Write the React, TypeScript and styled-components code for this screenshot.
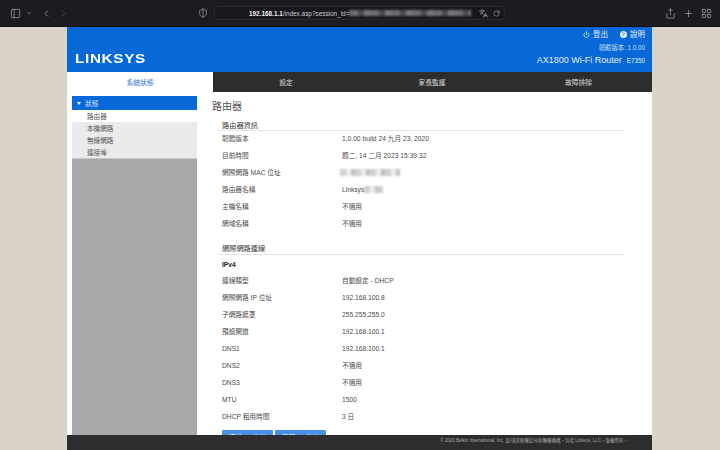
import { createGlobalStyle, styled } from "styled-components";
import type { ReactNode } from "react";
import {
  ChevronDown,
  ChevronLeft,
  ChevronRight,
  Languages,
  LayoutGrid,
  PanelLeft,
  Plus,
  Power,
  RotateCw,
  Share,
  ShieldHalf,
} from "lucide-react";
import { BsQuestionCircleFill } from "react-icons/bs";

const GlobalStyle = createGlobalStyle`
  html, body {
    margin: 0;
    padding: 0;
    height: 100%;
    overflow: hidden;
    background: #d9d3c9;
    font-family: "Liberation Sans", "Noto Sans CJK TC", sans-serif;
  }
`;

const Page = styled.div`
  width: 720px;
  height: 450px;
  display: flex;
  flex-direction: column;
  overflow: hidden;
`;

const BrowserBar = styled.div`
  height: 26px;
  flex: none;
  background: #1c1b20;
  border-bottom: 1px solid #0e0e10;
  display: flex;
  align-items: center;
  padding: 0 8px 0 10px;
  color: #a9a9ad;
`;

const ToolGroup = styled.div<{ $gap: number; $left?: number }>`
  display: flex;
  align-items: center;
  gap: ${(p) => p.$gap}px;
  margin-left: ${(p) => p.$left ?? 0}px;
  flex: none;
`;

const AddressBar = styled.div`
  width: 291px;
  height: 14px;
  margin-left: 6px;
  flex: none;
  border-radius: 4px;
  background: #18171b;
  border: 1px solid #29282d;
  display: flex;
  align-items: center;
  padding: 0 4px 0 34px;
  box-sizing: border-box;
  color: #d8d8da;
  font-size: 6.4px;
`;

const Url = styled.span`
  flex: none;
  color: #c9c9cb;
  b {
    color: #f0f0f0;
    font-weight: 700;
  }
`;

const UrlMask = styled.span`
  flex: none;
  width: 122px;
  height: 6px;
  margin-right: 8px;
  background: repeating-linear-gradient(90deg, #6d6d70 0 9px, #4c4c50 9px 15px, #77777a 15px 21px);
  filter: blur(0.8px);
`;

const Spacer = styled.div`
  flex: 1;
`;

const Shell = styled.div`
  width: 585px;
  margin-left: 67px;
  flex: 1;
  min-height: 0;
  display: flex;
  flex-direction: column;
  background: #fff;
`;

const Header = styled.header`
  height: 45px;
  box-sizing: border-box;
  flex: none;
  background: #0768d8;
  display: flex;
  justify-content: space-between;
  align-items: flex-end;
  color: #fff;
  padding: 0 7px 5px 8px;
`;

const Logo = styled.div`
  font-size: 13.5px;
  font-weight: 700;
  line-height: 13px;
  letter-spacing: 0.6px;
  margin-bottom: 2px;
  transform: scaleX(1.13);
  transform-origin: left center;
`;

const HeaderInfo = styled.div`
  display: flex;
  flex-direction: column;
  align-items: flex-end;
`;

const HeaderLinks = styled.div`
  display: flex;
  gap: 12px;
  font-size: 7.5px;
  line-height: 9px;
  margin-bottom: 5px;
  color: #e8f0fb;
`;

const HeaderLink = styled.span`
  display: inline-flex;
  align-items: center;
  gap: 3px;
`;

const Firmware = styled.div`
  font-size: 6.3px;
  line-height: 8px;
  color: #cfe0f6;
  margin-bottom: 2px;
`;

const Model = styled.div`
  font-size: 9px;
  line-height: 12px;
  color: #e6effb;
  small {
    font-size: 6.3px;
    margin-left: 5px;
  }
`;

const Tabs = styled.nav`
  height: 20px;
  flex: none;
  display: grid;
  grid-template-columns: 146px 146px 146px 147px;
`;

const Tab = styled.div<{ $active?: boolean }>`
  display: flex;
  align-items: center;
  justify-content: center;
  font-size: 6.8px;
  color: ${(p) => (p.$active ? "#2a72d4" : "#dcdcdc")};
  background: ${(p) => (p.$active ? "#fff" : "#2d2d2d")};
`;

const Body = styled.div`
  flex: 1;
  min-height: 0;
  display: flex;
  overflow: hidden;
`;

const Sidebar = styled.aside`
  width: 125px;
  flex: none;
  margin: 4px 0 0 5px;
  display: flex;
  flex-direction: column;
  background: #a8a8a8;
`;

const SideHead = styled.div`
  height: 14px;
  flex: none;
  background: #0768d8;
  color: #d9e7fa;
  font-size: 6.8px;
  display: flex;
  align-items: center;
  padding-left: 5px;
  gap: 4px;
`;

const Caret = styled.i`
  width: 0;
  height: 0;
  border-left: 2.5px solid transparent;
  border-right: 2.5px solid transparent;
  border-top: 3px solid #fff;
`;

const SideList = styled.div`
  background: #eaeaea;
  border-bottom: 1px solid #c9c9c9;
`;

const SideItem = styled.div<{ $active?: boolean }>`
  height: 12px;
  display: flex;
  align-items: center;
  padding-left: 15px;
  font-size: 6.6px;
  color: #555;
  background: ${(p) => (p.$active ? "#fff" : "transparent")};
`;

const Main = styled.main`
  flex: 1;
  min-width: 0;
  padding: 8px 27px 0 15px;
  color: #444;
`;

const Title = styled.h1`
  margin: 0 0 7px;
  font-size: 10px;
  line-height: 13px;
  font-weight: 400;
  color: #555;
`;

const SectionHead = styled.h2<{ $top?: number; $pad?: number }>`
  margin: ${(p) => p.$top ?? 0}px 0 0 5px;
  padding: 0 0 ${(p) => p.$pad ?? 0}px 5px;
  height: 10px;
  border-bottom: 1px solid #dfe4ea;
  font-size: 7.2px;
  line-height: 12px;
  font-weight: 400;
  color: #333;
`;

const Row = styled.div`
  height: 17px;
  box-sizing: border-box;
  padding: 0 0 3px 10px;
  display: grid;
  grid-template-columns: 120px 1fr;
  align-items: center;
  font-size: 6.7px;
  color: #4a4a4a;
`;

const SubHead = styled(Row)`
  font-weight: 700;
  color: #222;
  height: 18px;
  padding-bottom: 0;
`;

const Value = styled.span`
  display: inline-flex;
  align-items: center;
`;

const Redacted = styled.span<{ $width: number; $left?: number }>`
  display: inline-block;
  width: ${(p) => p.$width}px;
  height: 7px;
  margin-left: ${(p) => p.$left ?? 0}px;
  background: repeating-linear-gradient(90deg, #d0d0d0 0 6px, #ececec 6px 11px, #c2c2c2 11px 15px);
  filter: blur(1px);
`;

const Buttons = styled.div`
  display: flex;
  gap: 2px;
  margin: 4px 0 0 10px;
`;

const ActionButton = styled.button`
  width: 51px;
  height: 14px;
  flex: none;
  border: none;
  padding: 0;
  border-radius: 1px;
  background: #4a90e2;
  color: #fff;
  font-family: inherit;
  font-size: 6.8px;
`;

const Footer = styled.footer`
  height: 15px;
  flex: none;
  background: #2d2d2d;
  color: #a9a9a9;
  font-size: 4.5px;
  display: flex;
  align-items: center;
  justify-content: flex-end;
  padding: 0 24px 5px 0;
  box-sizing: border-box;
`;

const routerInfo: [string, ReactNode][] = [
  ["韌體版本", "1.0.00 build 24 九月 23, 2020"],
  ["目前時間", "週二, 14 二月 2023 15:39:32"],
  ["網際網路 MAC 位址", <Redacted $width={60} $left={-2} />],
  ["路由器名稱", <>Linksys<Redacted $width={19} /></>],
  ["主機名稱", "不適用"],
  ["網域名稱", "不適用"],
];

const connection: [string, string][] = [
  ["連線類型", "自動設定 - DHCP"],
  ["網際網路 IP 位址", "192.168.100.8"],
  ["子網路遮罩", "255.255.255.0"],
  ["預設閘道", "192.168.100.1"],
  ["DNS1", "192.168.100.1"],
  ["DNS2", "不適用"],
  ["DNS3", "不適用"],
  ["MTU", "1500"],
  ["DHCP 租用時間", "3 日"],
];

export default function App() {
  return (
    <Page>
      <GlobalStyle />
      <BrowserBar>
        <ToolGroup $gap={5}>
          <PanelLeft size={11} strokeWidth={1.5} />
          <ChevronDown size={6} strokeWidth={2.5} />
        </ToolGroup>
        <ToolGroup $gap={6} $left={9}>
          <ChevronLeft size={11} strokeWidth={1.5} />
          <ChevronRight size={11} strokeWidth={1.5} color="#55555a" />
        </ToolGroup>
        <ToolGroup $gap={0} $left={129}>
          <ShieldHalf size={10} strokeWidth={1.5} />
        </ToolGroup>
        <AddressBar>
          <Url>
            <b>192.168.1.1</b>/index.asp?session_id=
          </Url>
          <UrlMask />
          <ToolGroup $gap={5}>
            <Languages size={9} strokeWidth={1.5} />
            <RotateCw size={7} strokeWidth={1.5} />
          </ToolGroup>
        </AddressBar>
        <Spacer />
        <ToolGroup $gap={7}>
          <Share size={11} strokeWidth={1.5} />
          <Plus size={11} strokeWidth={1.5} />
          <LayoutGrid size={11} strokeWidth={1.5} />
        </ToolGroup>
      </BrowserBar>
      <Shell>
        <Header>
          <Logo>LINKSYS</Logo>
          <HeaderInfo>
            <HeaderLinks>
              <HeaderLink>
                <Power size={7} strokeWidth={2.5} />
                登出
              </HeaderLink>
              <HeaderLink>
                <BsQuestionCircleFill size={7} />
                說明
              </HeaderLink>
            </HeaderLinks>
            <Firmware>韌體版本: 1.0.00</Firmware>
            <Model>
              AX1800 Wi-Fi Router<small>E7350</small>
            </Model>
          </HeaderInfo>
        </Header>
        <Tabs>
          <Tab $active>系統狀態</Tab>
          <Tab>設定</Tab>
          <Tab>家長監護</Tab>
          <Tab>故障排除</Tab>
        </Tabs>
        <Body>
          <Sidebar>
            <SideHead>
              <Caret />
              狀態
            </SideHead>
            <SideList>
              <SideItem $active>路由器</SideItem>
              <SideItem>本機網路</SideItem>
              <SideItem>無線網路</SideItem>
              <SideItem>連接埠</SideItem>
            </SideList>
          </Sidebar>
          <Main>
            <Title>路由器</Title>
            <SectionHead>路由器資訊</SectionHead>
            {routerInfo.map(([label, value]) => (
              <Row key={label}>
                <span>{label}</span>
                <Value>{value}</Value>
              </Row>
            ))}
            <SectionHead $top={10} $pad={1}>網際網路連線</SectionHead>
            <SubHead>IPv4</SubHead>
            {connection.map(([label, value]) => (
              <Row key={label}>
                <span>{label}</span>
                <span>{value}</span>
              </Row>
            ))}
            <Buttons>
              <ActionButton>釋放 IP 位址</ActionButton>
              <ActionButton>更新 IP 位址</ActionButton>
            </Buttons>
          </Main>
        </Body>
        <Footer>© 2020 Belkin International, Inc. 及/或其附屬公司和聯屬機構，包括 Linksys, LLC，版權所有。</Footer>
      </Shell>
    </Page>
  );
}
